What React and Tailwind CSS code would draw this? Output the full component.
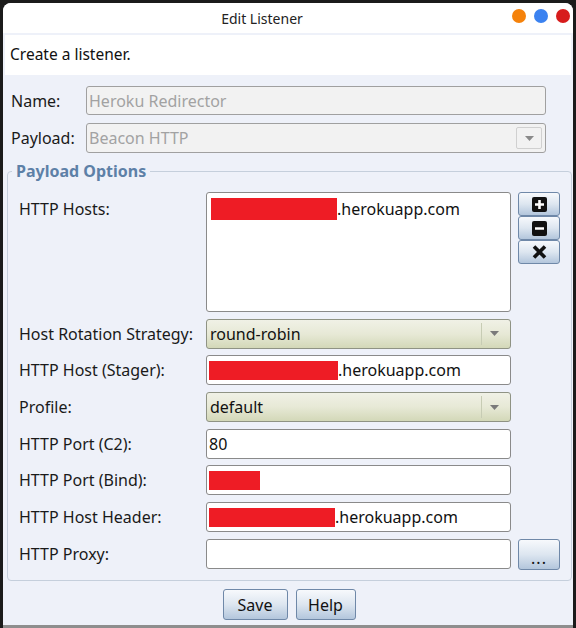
import React from 'react';

const font = { fontFamily: '"Noto Sans", "Open Sans", sans-serif' };

function Arrow() {
  return (
    <div className="w-[26px] h-full flex items-center justify-center border-l border-[#c7ccb4]">
      <svg width="9" height="5" viewBox="0 0 9 5"><path d="M0 0h9L4.5 5z" fill="#7a7a7a" /></svg>
    </div>
  );
}

function Combo({ value }) {
  return (
    <div className="h-[30px] w-[305px] flex items-stretch rounded-[3px] border border-[#8f9384] bg-gradient-to-b from-[#f0f1e6] via-[#e7e9d6] to-[#d3d8b8]">
      <div className="flex-1 flex items-center pl-[3px] text-[16px] text-[#111]">{value}</div>
      <div className="py-[3px] pr-[3px]"><Arrow /></div>
    </div>
  );
}

function Field({ value, redact }) {
  return (
    <div className="h-[30px] w-[305px] flex items-center rounded-[3px] border border-[#8a8a8a] bg-white pl-[2px] text-[16px] text-[#111]">
      {redact ? <span className="bg-[#ee1c25] h-[19px] inline-block" style={{ width: redact }} /> : null}
      {value}
    </div>
  );
}

function BlueButton({ className = '', children }) {
  return (
    <button className={'flex items-center justify-center rounded-[3px] border border-[#6f88a8] bg-gradient-to-b from-[#f7f9fc] via-[#dde6f0] to-[#b3c6dc] text-[16px] text-[#111] ' + className}>
      {children}
    </button>
  );
}

function Row({ label, children }) {
  return (
    <div className="flex items-center">
      <div className="w-[187px] text-[16px] text-[#1a1a1a]">{label}</div>
      {children}
    </div>
  );
}

export default function App() {
  return (
    <div className="w-[576px] h-[628px] bg-[#1b1b1b] pt-[3px] pl-[3px]" style={font}>
      <div className="w-[570px] h-[622px] rounded-t-[8px] bg-[#eef1f9] flex flex-col overflow-hidden">
        {/* title bar */}
        <div className="h-[30px] bg-white flex items-center relative">
          <div className="flex-1 text-center text-[14px] text-[#222] pr-[52px]">Edit Listener</div>
          <div className="absolute right-[3px] top-[6px] flex gap-[8px]">
            <span className="w-[14px] h-[14px] rounded-full bg-[#f5820b]" />
            <span className="w-[14px] h-[14px] rounded-full bg-[#3b82f0]" />
            <span className="w-[14px] h-[14px] rounded-full bg-[#d71c1c]" />
          </div>
        </div>

        <div className="mx-[2px] mt-[2px] h-[40px] bg-white flex items-center pl-[5px] text-[15.5px] text-[#111]">
          Create a listener.
        </div>

        {/* name / payload */}
        <div className="mt-[11px] flex flex-col gap-[8px] pl-[8px]">
          <div className="flex items-center">
            <div className="w-[75px] text-[16px] text-[#1a1a1a]">Name:</div>
            <div className="h-[29px] w-[460px] rounded-[3px] border border-[#a0a0a0] bg-[#f2f2f2] flex items-center pl-[2px] text-[16px] text-[#a2a2a2]">
              Heroku Redirector
            </div>
          </div>
          <div className="flex items-center">
            <div className="w-[75px] text-[16px] text-[#1a1a1a]">Payload:</div>
            <div className="h-[30px] w-[460px] rounded-[3px] border border-[#a0a0a0] bg-[#f2f2f2] flex items-stretch">
              <div className="flex-1 flex items-center pl-[2px] text-[16px] text-[#a2a2a2]">Beacon HTTP</div>
              <div className="py-[3px] pr-[3px]">
                <div className="w-[26px] h-full flex items-center justify-center border border-[#d0d0d0] rounded-[2px]">
                  <svg width="9" height="5" viewBox="0 0 9 5"><path d="M0 0h9L4.5 5z" fill="#8a8a8a" /></svg>
                </div>
              </div>
            </div>
          </div>
        </div>

        {/* payload options */}
        <fieldset className="mt-[6px] ml-[4px] w-[565px] h-[422px] border border-[#c5cfdc] rounded-[4px] pl-[11px] pr-[11px] pt-[9px]">
          <legend className="-ml-[7px] px-[4px] text-[16px] font-bold text-[#5d80a7]">Payload Options</legend>
          <div className="flex flex-col gap-[6.7px]">
            <div className="flex items-start">
              <div className="w-[187px] text-[16px] text-[#1a1a1a] pt-[5px]">HTTP Hosts:</div>
              <div className="h-[120px] w-[305px] rounded-[3px] border border-[#8a8a8a] bg-white pl-[4px] pt-[4px]">
                <div className="flex items-center text-[16px] text-[#111]">
                  <span className="bg-[#ee1c25] w-[126px] h-[22px] inline-block" />
                  .herokuapp.com
                </div>
              </div>
              <div className="ml-[7px] flex flex-col">
                <BlueButton className="w-[42px] h-[24px]">
                  <svg width="15" height="15" viewBox="0 0 15 15"><rect width="15" height="15" rx="2" fill="#111" /><path d="M7.5 3v9M3 7.5h9" stroke="#fff" strokeWidth="2.6" /></svg>
                </BlueButton>
                <BlueButton className="w-[42px] h-[24px]">
                  <svg width="15" height="15" viewBox="0 0 15 15"><rect width="15" height="15" rx="2" fill="#111" /><path d="M3 7.5h9" stroke="#fff" strokeWidth="2.6" /></svg>
                </BlueButton>
                <BlueButton className="w-[42px] h-[24px]">
                  <svg width="15" height="14" viewBox="0 0 15 14"><path d="M2 1.5l11 11M13 1.5l-11 11" stroke="#111" strokeWidth="3.6" /></svg>
                </BlueButton>
              </div>
            </div>
            <Row label="Host Rotation Strategy:"><Combo value="round-robin" /></Row>
            <Row label="HTTP Host (Stager):"><Field redact="129px" value=".herokuapp.com" /></Row>
            <Row label="Profile:"><Combo value="default" /></Row>
            <Row label="HTTP Port (C2):"><Field value="80" /></Row>
            <Row label="HTTP Port (Bind):"><Field redact="51px" /></Row>
            <Row label="HTTP Host Header:"><Field redact="126px" value=".herokuapp.com" /></Row>
            <Row label="HTTP Proxy:">
              <Field />
              <BlueButton className="ml-[7px] w-[42px] h-[31px] items-end pb-[3px] text-[13px] leading-none">
                <span className="tracking-[1px]">...</span>
              </BlueButton>
            </Row>
          </div>
        </fieldset>

        <div className="flex justify-center gap-[8px] mt-[8px] pl-[2px]">
          <BlueButton className="w-[65px] h-[31px]">Save</BlueButton>
          <BlueButton className="w-[60px] h-[31px]">Help</BlueButton>
        </div>
      </div>
      <div className="w-[570px] h-[3px] bg-[#8e8e8e]" />
    </div>
  );
}
